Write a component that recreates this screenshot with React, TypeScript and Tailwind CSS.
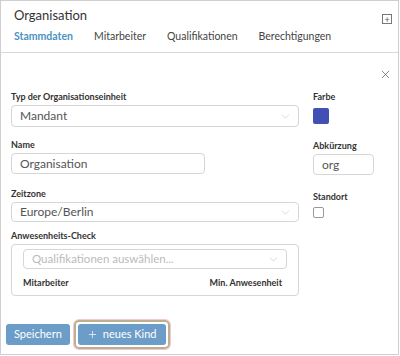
import { X, ChevronDown, Plus } from "lucide-react";

const font = { fontFamily: 'Lato, "Noto Sans", sans-serif' };

function Label({ children }: { children: React.ReactNode }) {
  return <div className="text-[9px] font-bold text-[#333] leading-[12px] mb-[2px]">{children}</div>;
}

function Select({ value, placeholder, h = "h-[21px]" }: { value?: string; placeholder?: string; h?: string }) {
  return (
    <div className={`${h} rounded-[4px] border border-[#d6d6d6] flex items-center justify-between pl-[8px] pr-[6px]`}>
      <span className={value ? "text-[12px] text-[#555]" : "text-[11.5px] text-[#bbb]"}>{value ?? placeholder}</span>
      <ChevronDown className="w-[13px] h-[13px] text-[#c4c4c4]" strokeWidth={1.2} />
    </div>
  );
}

function Input({ value }: { value: string }) {
  return (
    <div className="h-[21px] rounded-[4px] border border-[#d6d6d6] flex items-center pl-[8px] text-[12px] text-[#555]">
      {value}
    </div>
  );
}

export default function App() {
  return (
    <div className="w-[399px] h-[355px] border border-[#cfcfcf] bg-white flex flex-col" style={font}>
      <div className="relative px-[13px] pt-[4px] border-b border-[#d8d8d8] h-[52px]">
        <div className="text-[13px] text-[#333] leading-[20px]">Organisation</div>
        <div className="absolute right-[6px] top-[13px] w-[10px] h-[10px] border border-[#777] flex items-center justify-center text-[9px] leading-none text-[#555]">
          +
        </div>
        <div className="flex gap-[21px] text-[10.5px] mt-[4px] text-[#444]">
          <span className="font-bold text-[#4a93c0]">Stammdaten</span>
          <span>Mitarbeiter</span>
          <span>Qualifikationen</span>
          <span>Berechtigungen</span>
        </div>
      </div>

      <div className="relative flex-1 px-[10px] pt-[38px]">
        <X className="absolute right-[6px] top-[15px] w-[13px] h-[13px] text-[#555]" strokeWidth={1.3} />
        <div className="flex gap-[14px]">
          <div className="w-[288px] flex flex-col">
            <Label>Typ der Organisationseinheit</Label>
            <Select value="Mandant" h="h-[22px]" />
            <div className="mt-[12px]">
              <Label>Name</Label>
              <div className="w-[194px]">
                <Input value="Organisation" />
              </div>
            </div>
            <div className="mt-[14px]">
              <Label>Zeitzone</Label>
              <Select value="Europe/Berlin" h="h-[20px]" />
            </div>
            <div className="mt-[8px]">
              <Label>Anwesenheits-Check</Label>
              <div className="rounded-[4px] border border-[#d6d6d6] px-[11px] pt-[4px] pb-[6px]">
                <Select placeholder="Qualifikationen auswählen..." h="h-[20px]" />
                <div className="flex justify-between text-[9px] font-bold text-[#333] leading-[12px] mt-[8px] pr-[5px]">
                  <span>Mitarbeiter</span>
                  <span>Min. Anwesenheit</span>
                </div>
              </div>
            </div>
          </div>
          <div className="flex flex-col">
            <Label>Farbe</Label>
            <div className="w-[16px] h-[16px] rounded-[2px] bg-[#4350b3] mt-[3px]" />
            <div className="mt-[16px]">
              <Label>Abkürzung</Label>
              <div className="w-[61px]">
                <Input value="org" />
              </div>
            </div>
            <div className="mt-[16px]">
              <Label>Standort</Label>
              <div className="w-[11px] h-[11px] border border-[#999] rounded-[2px] mt-[4px]" />
            </div>
          </div>
        </div>

        <div className="flex items-center gap-[4px] mt-[24px] -ml-[5px]">
          <button className="h-[21px] px-[8px] rounded-[3px] bg-[#6c9dc8] text-white text-[11px]">Speichern</button>
          <div className="p-[2px] rounded-[5px] border-2 border-[#bdb08f] shadow-[0_0_0_1px_#f0c8d8]">
            <button className="h-[21px] px-[9px] rounded-[3px] bg-[#6c9dc8] text-white text-[11px] flex items-center gap-[5px]">
              <Plus className="w-[11px] h-[11px]" strokeWidth={1.5} />
              neues Kind
            </button>
          </div>
        </div>
      </div>
    </div>
  );
}
